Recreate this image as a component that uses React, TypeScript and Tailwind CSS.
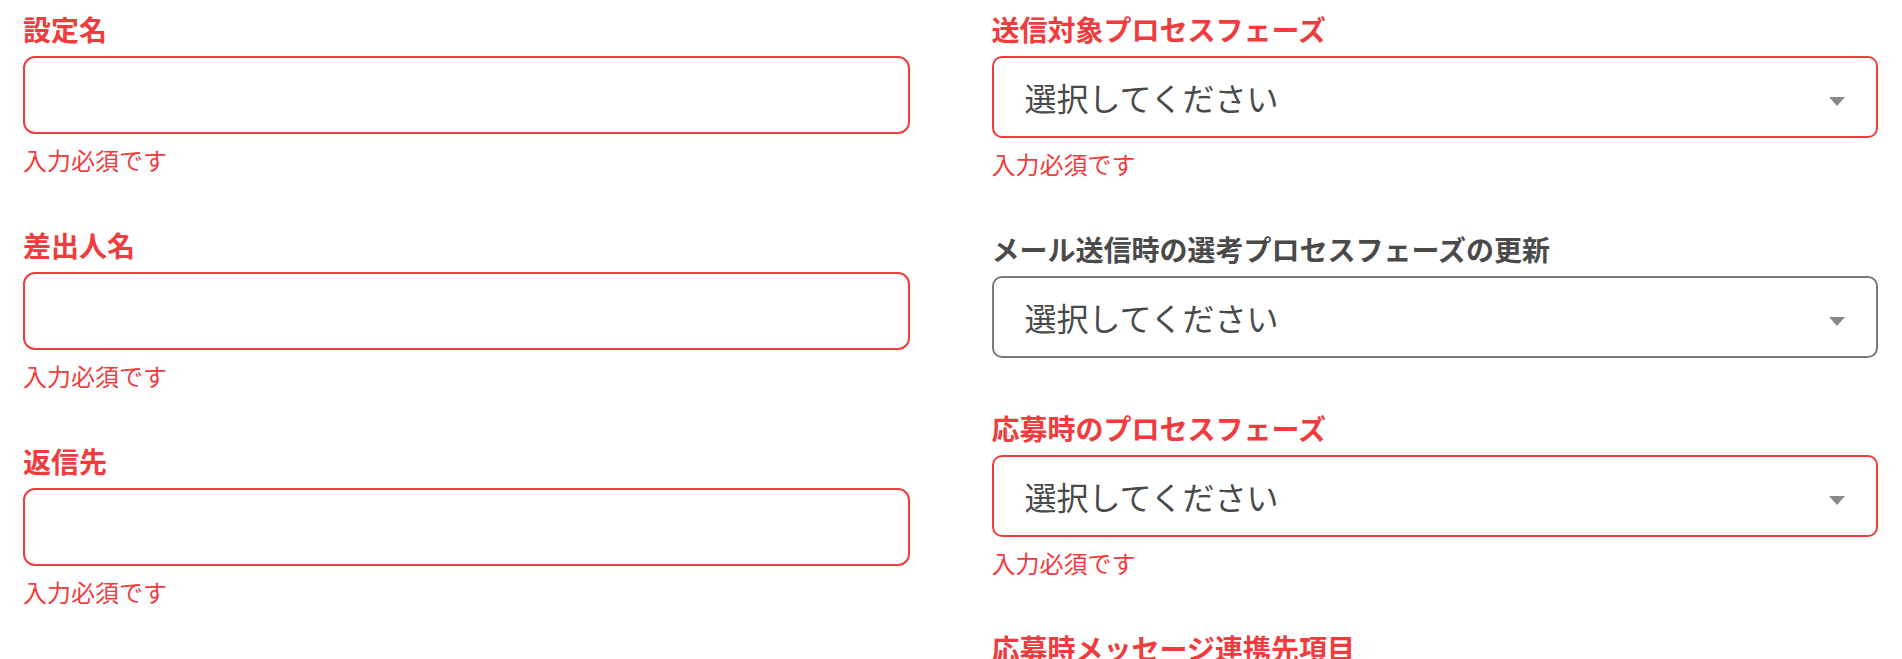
import React from "react";

type Field = {
  label: string;
  kind: "input" | "select";
  required: boolean;
};

const leftFields: Field[] = [
  { label: "設定名", kind: "input", required: true },
  { label: "差出人名", kind: "input", required: true },
  { label: "返信先", kind: "input", required: true },
];

const rightFields: Field[] = [
  { label: "送信対象プロセスフェーズ", kind: "select", required: true },
  { label: "メール送信時の選考プロセスフェーズの更新", kind: "select", required: false },
  { label: "応募時のプロセスフェーズ", kind: "select", required: true },
  { label: "応募時メッセージ連携先項目", kind: "select", required: true },
];

function SelectBox({ required }: { required: boolean }) {
  return (
    <div
      className={
        required
          ? "flex h-[82px] items-center justify-between rounded-[10px] border-2 border-[#f03c3c] bg-white pl-[31px] pr-[31px]"
          : "flex h-[82px] items-center justify-between rounded-[10px] border-2 border-[#7a7a7a] bg-white pl-[31px] pr-[31px]"
      }
    >
      <span className="text-[32px] leading-none text-[#4a4a4a]">選択してください</span>
      <svg width="16" height="9" viewBox="0 0 16 9" className="mt-[9px]">
        <path d="M0 0 H16 L8 9 Z" fill="#888888" />
      </svg>
    </div>
  );
}

function FormField({ field }: { field: Field }) {
  const isError = field.required;
  return (
    <div className={isError ? "mb-[46px]" : "mb-[49px]"}>
      <div
        className={
          isError
            ? "mb-[6px] text-[28px] font-bold leading-[42px] text-[#f03c3c]"
            : "mb-[6px] text-[28px] font-bold leading-[42px] text-[#4a4a4a]"
        }
      >
        {field.label}
      </div>
      {field.kind === "input" ? (
        <input
          type="text"
          className="block h-[78px] w-full rounded-[12px] border-2 border-[#f03c3c] bg-white px-[24px] text-[28px] outline-none"
        />
      ) : (
        <SelectBox required={field.required} />
      )}
      {isError ? (
        <p className="mt-[8px] text-[24px] leading-[36px] text-[#f03c3c]">入力必須です</p>
      ) : null}
    </div>
  );
}

export default function App() {
  return (
    <div
      className="h-[659px] w-full overflow-hidden bg-white pl-[23px] pr-[24px] pt-[8px]"
      style={{ fontFamily: '"Noto Sans CJK JP", "Noto Sans", sans-serif' }}
    >
      <div className="grid grid-cols-2 gap-x-[82px]">
        <div>
          {leftFields.map((f) => (
            <FormField key={f.label} field={f} />
          ))}
        </div>
        <div>
          {rightFields.map((f) => (
            <FormField key={f.label} field={f} />
          ))}
        </div>
      </div>
    </div>
  );
}
